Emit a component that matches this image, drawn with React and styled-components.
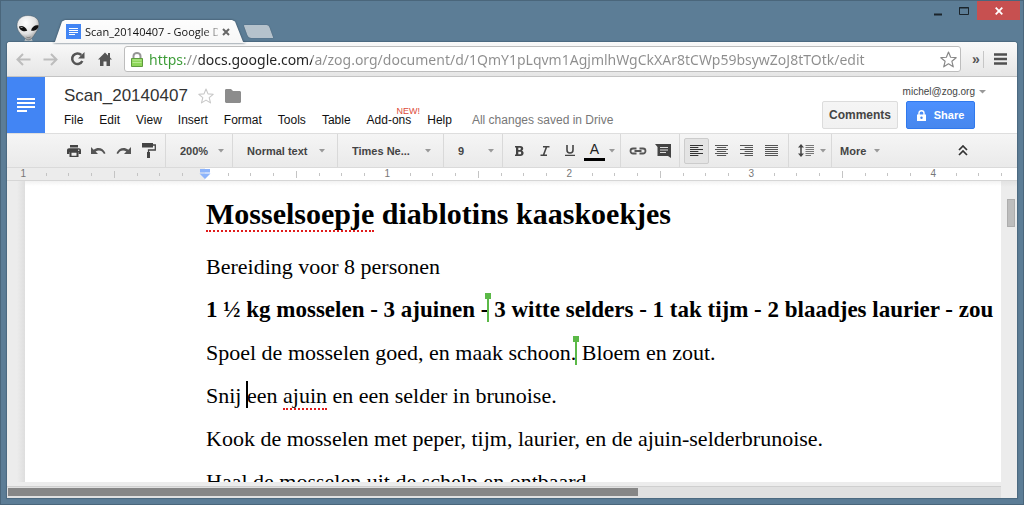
import React from 'react';
import styled, { createGlobalStyle } from 'styled-components';

const GlobalStyle = createGlobalStyle`
	* {
		box-sizing: border-box;
	}

	body {
		margin: 0;
		font-family: 'Liberation Sans', Arial, sans-serif;
		font-size: 12px;
		color: #222;
	}

	button,
	input,
	select {
		margin: 0;
		padding: 0;
		border: 0;
		background: none;
		font: inherit;
		color: inherit;
	}

	svg {
		display: block;
		flex: none;
	}
`;

/* ---------- Window frame ---------- */

const Frame = styled.div`
	display: flex;
	flex-direction: column;
	height: 100vh;
	padding: 0 6px 6px;
	background: #5c7d96;
	border: 1px solid #4a667b;
	overflow: hidden;
`;

const TitleBar = styled.header`
	display: flex;
	align-items: flex-end;
	height: 41px;
	flex: none;
	margin-right: -3px;
`;

const Avatar = styled.div`
	padding-left: 9px;
	width: 46px;
`;

const TabShadow = styled.div`
	filter: drop-shadow(0 0 1px #34495a);
	margin-bottom: -1px;
	position: relative;
`;

const Tab = styled.div`
	display: flex;
	align-items: center;
	width: 193px;
	height: 23px;
	padding: 0 16px 0 13px;
	background: linear-gradient(#fdfdfd, #f7f7f7);
	clip-path: polygon(0 100%, 2px 95%, 9px 6%, 12px 0, 179px 0, 182px 6%, 190px 95%, 193px 100%);
`;

const TabTitle = styled.span`
	flex: 1;
	min-width: 0;
	margin: 0 4px;
	overflow: hidden;
	white-space: nowrap;
	font-family: 'Open Sans', 'Noto Sans', sans-serif;
	font-size: 11px;
	line-height: 16px;
	color: #111;
	mask-image: linear-gradient(to right, #000 118px, transparent 140px);
`;

const PlainButton = styled.button`
	display: flex;
	align-items: center;
	justify-content: center;
`;

const NewTab = styled.button`
	width: 25px;
	height: 13px;
	margin: 0 0 4px 0;
	background: #b5c2cc;
	border-radius: 1px 2px 1px 3px;
	transform: skewX(20deg);
	box-shadow: 0 0 1px #34495a;
`;

const WindowButtons = styled.div`
	display: flex;
	align-self: flex-start;
	margin-left: auto;
	height: 19px;
`;

const WindowButton = styled(PlainButton)`
	width: ${(props) => (props.$close ? '43px' : '26px')};
	height: 19px;
	background: ${(props) => (props.$close ? '#c75050' : 'transparent')};
`;

const Content = styled.div`
	display: flex;
	flex-direction: column;
	flex: 1;
	min-height: 0;
	background: #fff;
	border-radius: 3px 3px 0 0;
	box-shadow: 0 0 1px 1px #4b697f;
	overflow: hidden;
`;

/* ---------- Browser toolbar ---------- */

const BrowserBar = styled.nav`
	display: flex;
	align-items: center;
	flex: none;
	height: 35px;
	padding-left: 3px;
	background: linear-gradient(#f9f9f9, #e6e6e6);
	border-bottom: 1px solid #c4c4c4;
`;

const NavButton = styled(PlainButton)`
	width: 27px;
	height: 26px;
	color: ${(props) => (props.$off ? '#bdbdbd' : '#555')};
`;

const AddressBox = styled.div`
	display: flex;
	align-items: center;
	flex: 1;
	min-width: 0;
	height: 26px;
	margin-left: 6px;
	padding: 0 3px 0 6px;
	background: #fff;
	border: 1px solid #bdbdbd;
	border-radius: 3px;
`;

const Address = styled.input`
	flex: 1;
	min-width: 0;
	margin-left: 6px;
	height: 22px;
	font-family: 'Noto Sans', 'Open Sans', sans-serif;
	font-size: 14px;
	outline: 0;
	color: transparent;
	background: linear-gradient(
		to right,
		#3a9b35 36px,
		#8d8d8d 36px,
		#8d8d8d 50px,
		#222 50px,
		#222 163px,
		#8d8d8d 163px
	);
	background-clip: text;
`;

const Overflow = styled(PlainButton)`
	width: 22px;
	height: 17px;
	margin-left: 1px;
	padding-left: 7px;
	border-right: 1px solid #c6c6c6;
	font-size: 14px;
	font-weight: bold;
	color: #555;
`;

const MenuButton = styled(PlainButton)`
	width: 33px;
	height: 26px;
`;

/* ---------- Docs header ---------- */

const DocsHeader = styled.header`
	display: flex;
	flex: none;
	height: 56px;
`;

const Home = styled.a`
	display: flex;
	align-items: center;
	justify-content: center;
	width: 38px;
	background: #4285f4;
`;

const Titles = styled.div`
	padding: 8px 0 0 19px;
`;

const TitleRow = styled.div`
	display: flex;
	align-items: center;
	height: 22px;
`;

const DocTitle = styled.h1`
	margin: 0 10px 0 0;
	font-size: 17px;
	font-weight: normal;
	line-height: 22px;
	color: #333;
`;

const MenuRow = styled.div`
	display: flex;
	gap: 16px;
	margin-top: 5px;
	line-height: 16px;
`;

const MenuItem = styled.button`
	position: relative;
	line-height: 16px;
	color: #111;
`;

const NewFlag = styled.span`
	position: absolute;
	top: -7px;
	left: 30px;
	font-size: 9px;
	line-height: 12px;
	color: #dd4b39;
`;

const Status = styled.span`
	margin-left: 4px;
	color: #777;
`;

const Account = styled.div`
	display: flex;
	flex-direction: column;
	align-items: flex-end;
	margin-left: auto;
	padding: 8px 31px 0 0;
`;

const AccountName = styled.button`
	display: flex;
	align-items: center;
	gap: 4px;
	font-size: 10px;
	line-height: 14px;
	color: #444;
`;

const Actions = styled.div`
	display: flex;
	gap: 8px;
	margin: 2px 11px 0 0;
`;

const Action = styled.button`
	display: flex;
	align-items: center;
	justify-content: center;
	gap: 8px;
	width: ${(props) => (props.$primary ? '69px' : '76px')};
	height: 28px;
	border: 1px solid ${(props) => (props.$primary ? '#3079ed' : '#dcdcdc')};
	border-radius: 2px;
	background: ${(props) =>
		props.$primary ? 'linear-gradient(#4d90fe, #4787ed)' : 'linear-gradient(#f5f5f5, #f1f1f1)'};
	color: ${(props) => (props.$primary ? '#fff' : '#444')};
	font-size: ${(props) => (props.$primary ? '11px' : '12px')};
	font-weight: bold;
`;

/* ---------- Editing toolbar ---------- */

const ToolBar = styled.div`
	display: flex;
	flex: none;
	height: 35px;
	background: linear-gradient(#f5f5f5, #eaeaea);
	border-top: 1px solid #dedede;
	border-bottom: 1px solid #dadada;
	color: #444;
	font-size: 11px;
	font-weight: bold;
`;

const Group = styled.div`
	display: flex;
	align-items: center;
	padding: 0 4px 0 ${(props) => props.$lead || '4px'};
	border-right: 1px solid #d9d9d9;
`;

const Tool = styled.button`
	display: flex;
	align-items: center;
	justify-content: center;
	width: 25px;
	height: 26px;
	border: 1px solid ${(props) => (props.$on ? '#ccc' : 'transparent')};
	border-radius: 2px;
	background: ${(props) => (props.$on ? '#e4e4e4' : 'transparent')};
	color: ${(props) => (props.$on ? '#333' : '#555')};
`;

const Picker = styled.label`
	display: flex;
	align-items: center;
	justify-content: space-between;
	width: ${(props) => props.$width};
	padding: 0 ${(props) => (props.$roomy ? '12px' : '8px')} 0 14px;
	border-right: 1px solid #d9d9d9;
`;

const Choice = styled.select`
	appearance: none;
	flex: 1;
	min-width: 0;
	outline: 0;
`;

const ColorTool = styled(Tool)`
	flex-direction: column;
	font-size: 14px;
	font-weight: normal;
	line-height: 17px;
	color: #222;

	&::after {
		content: '';
		width: 21px;
		height: 3px;
		background: #000;
	}
`;

const ArrowTool = styled.button`
	display: flex;
	align-items: center;
	justify-content: center;
	width: 9px;
	height: 26px;
`;

const More = styled.button`
	display: flex;
	align-items: center;
	gap: 8px;
	margin-left: 8px;
	font-size: 11px;
	font-weight: bold;
`;

const Collapse = styled(Tool)`
	align-self: center;
	margin: 0 42px 0 auto;
`;

/* ---------- Ruler ---------- */

const RulerBar = styled.div`
	display: flex;
	flex: none;
	height: 13px;
	padding-left: 5px;
	overflow: hidden;
	background: linear-gradient(to right, #ececec 198px, #fff 198px);
	border-bottom: 1px solid #d6d6d6;
`;

const Inch = styled.div`
	display: grid;
	grid-template-columns: repeat(8, 1fr);
	place-items: center;
	flex: none;
	width: 182px;
	font-size: 10px;
	line-height: 12px;
	color: #777;
`;

const Tick = styled.span`
	width: 1px;
	height: ${(props) => (props.$half ? '7px' : '3px')};
	background: #c4c4c4;
`;

/* ---------- Page ---------- */

const Workspace = styled.main`
	display: flex;
	flex: 1;
	min-height: 0;
	background: #ececec;
`;

const Viewport = styled.div`
	display: flex;
	flex-direction: column;
	flex: 1;
	min-width: 0;
`;

const Canvas = styled.div`
	flex: 1;
	min-height: 0;
	padding-left: 18px;
	overflow: hidden;
	background: linear-gradient(to right, #ececec 10px, #dedede 18px);
`;

const Page = styled.article`
	min-height: 100%;
	padding: 13px 0 0 181px;
	background: linear-gradient(#f2f2f2, #fff 5px);
	font-family: 'Liberation Serif', 'Times New Roman', serif;
	color: #000;
	white-space: nowrap;
`;

const Heading = styled.h2`
	margin: 0 0 11px;
	font-size: 30px;
	line-height: 40px;
`;

const Line = styled.p`
	margin: 0;
	font-size: ${(props) => (props.$strong ? '23px' : '22px')};
	font-weight: ${(props) => (props.$strong ? 'bold' : 'normal')};
	line-height: 43px;
	height: 43px;
`;

const Misspelt = styled.span`
	border-bottom: 2px dotted #e01b1b;
`;

const Caret = styled.span`
	position: relative;

	&::before {
		content: '';
		position: absolute;
		left: -1px;
		top: -2px;
		width: 2px;
		height: 27px;
		background: ${(props) => (props.$peer ? '#5bb947' : '#000')};
	}

	&::after {
		content: '';
		position: absolute;
		left: -3px;
		top: -4px;
		width: 6px;
		height: 6px;
		background: ${(props) => (props.$peer ? '#5bb947' : 'transparent')};
	}
`;

const ScrollRow = styled.div`
	flex: none;
	height: 16px;
	padding: 6px 0 2px 1px;
	background: linear-gradient(#ececec 4px, #cfcfcf 4px, #cfcfcf 5px, #e0e0e0 5px);
`;

const ScrollThumb = styled.div`
	width: 63.4%;
	height: 8px;
	background: #868686;
`;

const ScrollColumn = styled.div`
	width: 16px;
	padding: 18px 2px 0 6px;
	background: linear-gradient(#e2e2e2, #ececec 6px);
`;

const ColumnThumb = styled.div`
	height: 28px;
	background: #bdbdbd;
	border: 1px solid #adadad;
`;

/* ---------- Drawings ---------- */

const AlienIcon = () => (
	<svg width="26" height="27" viewBox="0 0 26 27">
		<defs>
			<radialGradient id="skin" cx="0.4" cy="0.3" r="0.75">
				<stop offset="0" stopColor="#fff" />
				<stop offset="0.6" stopColor="#e2e2e2" />
				<stop offset="1" stopColor="#8d8d8d" />
			</radialGradient>
		</defs>
		<path d="M10 22h5l2 5H8z" fill="#b9bec1" />
		<path
			d="M12 .5C5 .5 1 5 1 10.500c0 5 3.500 8.500 6 11 2 2 4 3.500 5.500 3.500 2 0 4-2 5.500-4.500 2-3.500 5-6.500 5-11.500C23 4 18.500.5 12 .5z"
			fill="url(#skin)"
			stroke="#475a68"
			strokeWidth="0.5"
		/>
		<path d="M3 11.500c2.500-1.500 7 0 8.300 4.300-3.800 1.400-8-.4-8.300-4.300z" fill="#111" />
		<path d="M22.500 10.500c-3-1-6.500 1-7.500 5 3.800 1 7.500-1.300 7.500-5z" fill="#111" />
		<path d="M4.500 12.300l2 .2" stroke="#ccc" strokeWidth="0.8" />
		<path d="M10.500 22.200c1.200.5 2.800.5 4-.2" stroke="#666" strokeWidth="0.7" fill="none" />
	</svg>
);

const FileIcon = () => (
	<svg width="15" height="15" viewBox="0 0 15 15">
		<path d="M0 0h15v15H0z" fill="#4285f4" />
		<path d="M3 4.500h9M3 6.500h9M3 8.500h9M3 10.500h6" stroke="#fff" />
	</svg>
);

const LockIcon = () => (
	<svg width="12" height="15" viewBox="0 0 12 15">
		<path d="M2.500 7V4a3.500 3 0 0 1 7 0v3" fill="none" stroke="#969696" strokeWidth="2" />
		<path d="M.5 6.500h11v8H.5z" fill="#8ed65a" stroke="#5f9b3f" />
		<path d="M1.500 8h9M1.500 10.500h9" stroke="#b9ea93" />
	</svg>
);

const StarIcon = ({ size, color }) => (
	<svg width={size} height={size} viewBox="0 0 16 16">
		<path
			d="M8 1l2 4.900 5.200.4-4 3.400 1.300 5.200L8 12.100l-4.500 2.800 1.300-5.200-4-3.400L6 5.900z"
			fill="#fff"
			stroke={color}
			strokeWidth="1.1"
			strokeLinejoin="round"
		/>
	</svg>
);

const ArrowDown = ({ size = 6, color = '#999' }) => (
	<svg width={size} height="4" viewBox="0 0 6 4" preserveAspectRatio="none">
		<path d="M0 0h6L3 3.500z" fill={color} />
	</svg>
);

const BackIcon = () => (
	<svg width="15" height="13" viewBox="0 0 15 13">
		<path d="M7 1L1.500 6.500 7 12M2 6.500h12.500" fill="none" stroke="currentColor" strokeWidth="2" />
	</svg>
);

const ForwardIcon = () => (
	<svg width="15" height="13" viewBox="0 0 15 13">
		<path d="M8 1l5.500 5.500L8 12M13 6.500H.5" fill="none" stroke="currentColor" strokeWidth="2" />
	</svg>
);

const ReloadIcon = () => (
	<svg width="15" height="14" viewBox="0 0 15 14">
		<path d="M11.300 3A5.300 5.300 0 1 0 12.300 9" fill="none" stroke="currentColor" strokeWidth="2.500" />
		<path d="M14.500 0v6.500H8z" fill="currentColor" />
	</svg>
);

const HouseIcon = () => (
	<svg width="14" height="14" viewBox="0 0 14 14">
		<path d="M7 .5L0 7.500h2V14h3.500V9.500h3V14H12V7.500h2L12 5.500V1h-2v2.500z" fill="currentColor" />
	</svg>
);

const PrintIcon = () => (
	<svg width="14" height="12" viewBox="0 0 14 12">
		<path d="M3 0h8v2.500H3zM2 3.300h10c1.200 0 2 .8 2 2V9h-2.500V7h-9v2H0V5.300c0-1.200.8-2 2-2z" fill="#444" />
		<path d="M2.500 6.500h9V12h-9z" fill="#444" />
		<path d="M4.500 7.700h5v3h-5z" fill="#f0f0f0" />
		<circle cx="11.700" cy="5.200" r="0.700" fill="#eee" />
	</svg>
);

const UndoIcon = ({ flip }) => (
	<svg width="15" height="8" viewBox="0 0 15 8">
		<g transform={flip ? 'translate(15 0) scale(-1 1)' : undefined}>
			<path d="M0 0v7h7L4.600 4.600C7.500 2.600 11 3.200 13 7l1.500-.7C12.300 1 7 -.4 2.700 2.700z" fill="currentColor" />
		</g>
	</svg>
);

const PaintIcon = () => (
	<svg width="14" height="15" viewBox="0 0 14 15">
		<path d="M0 0h11v4.500H0z" fill="#444" />
		<path d="M11 2h2.300v5H6.500v3" fill="none" stroke="#444" strokeWidth="1.300" />
		<path d="M5 9h3v6H5z" fill="#444" />
	</svg>
);

const BoldIcon = () => (
	<svg width="9" height="10" viewBox="0 0 9 10">
		<path
			fillRule="evenodd"
			d="M0 0h5.200C7.200 0 8.200 1 8.200 2.600c0 1-.5 1.700-1.300 2.100 1.100.4 1.700 1.200 1.700 2.300C8.600 8.900 7.300 10 5.300 10H0V8.600h1V1.400H0zM3.300 1.700v2.200h1.500c.7 0 1.100-.4 1.100-1.100S5.500 1.700 4.800 1.700zM3.300 5.700v2.500h1.700c.8 0 1.200-.5 1.200-1.300 0-.7-.4-1.200-1.200-1.200z"
			fill="#444"
		/>
	</svg>
);

const ItalicIcon = () => (
	<svg width="10" height="10" viewBox="0 0 10 10">
		<path d="M3 .8h6.500M.5 9.200H7M6.500 1L3.500 9" stroke="#444" strokeWidth="1.600" />
	</svg>
);

const UnderlineIcon = () => (
	<svg width="10" height="11" viewBox="0 0 10 11">
		<path d="M2 0v5a3 3 0 0 0 6 0V0" fill="none" stroke="#444" strokeWidth="1.600" />
		<path d="M0 10.300h10" stroke="#444" strokeWidth="1.200" />
	</svg>
);

const LinkIcon = () => (
	<svg width="18" height="8" viewBox="0 0 18 8">
		<path
			d="M7.500 1.500H4a2.500 2.500 0 0 0 0 5h3.500M10.500 1.500H14a2.500 2.500 0 0 1 0 5h-3.500M5.500 4h7"
			fill="none"
			stroke="#555"
			strokeWidth="1.800"
		/>
	</svg>
);

const CommentIcon = () => (
	<svg width="16" height="14" viewBox="0 0 16 14">
		<path d="M0 0h16v14l-3-2H2.500V3z" fill="#444" />
		<path d="M5 3.500h8M5 6h8M5 8.500h6" stroke="#ddd" strokeWidth="1.200" />
	</svg>
);

const alignments = {
	left: ['0', '14', '0', '9', '0', '14', '0', '9', '0', '14', '0', '9'],
	center: ['0', '14', '2', '12', '0', '14', '2', '12', '0', '14', '2', '12'],
	right: ['0', '14', '5', '14', '0', '14', '5', '14', '0', '14', '5', '14'],
	justify: ['0', '14', '0', '14', '0', '14', '0', '14', '0', '14', '0', '14'],
};

const AlignIcon = ({ kind }) => {
	const ends = alignments[kind];
	return (
		<svg width="13" height="12" viewBox="0 0 14 12" preserveAspectRatio="none">
			{[0, 1, 2, 3, 4, 5].map((row) => (
				<path
					key={row}
					d={`M${ends[row * 2]} ${row * 2 + 0.5}H${ends[row * 2 + 1]}`}
					stroke="currentColor"
					strokeWidth="1.200"
				/>
			))}
		</svg>
	);
};

const SpacingIcon = () => (
	<svg width="16" height="13" viewBox="0 0 16 13">
		<path d="M3 2v9" stroke="#444" strokeWidth="1.500" />
		<path d="M0 3.500L3 0l3 3.500zM0 9.500L3 13l3-3.500z" fill="#444" />
		<path d="M7.500 1.500H16M7.500 3.500H16M7.500 5.500H16M7.500 7.500H16M7.500 9.500H16M7.500 11.500H13" stroke="#777" />
	</svg>
);

const CollapseIcon = () => (
	<svg width="10" height="11" viewBox="0 0 10 11">
		<path d="M1 5l4-4 4 4M1 10l4-4 4 4" fill="none" stroke="#333" strokeWidth="1.700" />
	</svg>
);

const MarginIcon = () => (
	<svg width="12" height="10" viewBox="0 0 12 10">
		<path d="M1 0h10v3.500H1zM.5 4.500h11L6 10z" fill="#8db4fb" />
	</svg>
);

const pickers = [
	{ label: 'Zoom', value: '200%', width: '67px' },
	{ label: 'Styles', value: 'Normal text', width: '105px', roomy: true },
	{ label: 'Font', value: 'Times Ne...', width: '106px', roomy: true },
	{ label: 'Font size', value: '9', width: '59px' },
];

const menus = ['File', 'Edit', 'View', 'Insert', 'Format', 'Tools', 'Table', 'Add-ons', 'Help'];

const inches = ['1', '', '1', '2', '3', '4'];

const Browser = () => (
	<BrowserBar>
		<NavButton $off aria-label="Back">
			<BackIcon />
		</NavButton>
		<NavButton $off aria-label="Forward">
			<ForwardIcon />
		</NavButton>
		<NavButton aria-label="Reload">
			<ReloadIcon />
		</NavButton>
		<NavButton aria-label="Home">
			<HouseIcon />
		</NavButton>
		<AddressBox>
			<LockIcon />
			<Address
				aria-label="Address"
				defaultValue="https://docs.google.com/a/zog.org/document/d/1QmY1pLqvm1AgjmlhWgCkXAr8tCWp59bsywZoJ8tTOtk/edit"
			/>
			<PlainButton aria-label="Bookmark">
				<StarIcon size={17} color="#888" />
			</PlainButton>
		</AddressBox>
		<Overflow aria-label="More extensions">»</Overflow>
		<MenuButton aria-label="Menu">
			<svg width="13" height="12" viewBox="0 0 13 12">
				<path d="M0 1.500h13M0 6h13M0 10.500h13" stroke="#505050" strokeWidth="2.600" />
			</svg>
		</MenuButton>
	</BrowserBar>
);

const Header = () => (
	<DocsHeader>
		<Home href="#" aria-label="Docs home">
			<svg width="18" height="14" viewBox="0 0 18 14">
				<path d="M0 1h18M0 5h18M0 9h18M0 13h10" stroke="#fff" strokeWidth="2" />
			</svg>
		</Home>
		<Titles>
			<TitleRow>
				<DocTitle>Scan_20140407</DocTitle>
				<PlainButton aria-label="Star">
					<StarIcon size={16} color="#c8c8c8" />
				</PlainButton>
				<PlainButton aria-label="Move to folder">
					<svg width="27" height="14" viewBox="0 0 27 14">
						<path d="M11 1.500C11 .7 11.500 0 12.300 0H17l2 2h6.500c.8 0 1.500.6 1.500 1.400v9.100c0 .8-.6 1.500-1.400 1.500H12.400c-.8 0-1.400-.6-1.400-1.400z" fill="#8c8c8c" />
					</svg>
				</PlainButton>
			</TitleRow>
			<MenuRow>
				{menus.map((name) => (
					<MenuItem key={name}>
						{name}
						{name === 'Add-ons' && <NewFlag>NEW!</NewFlag>}
					</MenuItem>
				))}
				<Status>All changes saved in Drive</Status>
			</MenuRow>
		</Titles>
		<Account>
			<AccountName>
				michel@zog.org
				<ArrowDown size={7} />
			</AccountName>
			<Actions>
				<Action>Comments</Action>
				<Action $primary>
					<svg width="9" height="11" viewBox="0 0 9 11">
						<path d="M2 5V3a2.500 2.300 0 0 1 5 0v2" fill="none" stroke="#fff" strokeWidth="1.400" />
						<path d="M0 4.500h9V11H0z" fill="#fff" />
						<circle cx="4.500" cy="7.700" r="1.200" fill="#4787ed" />
					</svg>
					Share
				</Action>
			</Actions>
		</Account>
	</DocsHeader>
);

const Tools = () => (
	<ToolBar>
		<Group $lead="54px">
			<Tool aria-label="Print">
				<PrintIcon />
			</Tool>
			<Tool aria-label="Undo">
				<UndoIcon />
			</Tool>
			<Tool aria-label="Redo">
				<UndoIcon flip />
			</Tool>
			<Tool aria-label="Paint format">
				<PaintIcon />
			</Tool>
		</Group>
		{pickers.map((p) => (
			<Picker key={p.label} $width={p.width} $roomy={p.roomy}>
				<Choice aria-label={p.label}>
					<option>{p.value}</option>
				</Choice>
				<ArrowDown />
			</Picker>
		))}
		<Group>
			<Tool aria-label="Bold">
				<BoldIcon />
			</Tool>
			<Tool aria-label="Italic">
				<ItalicIcon />
			</Tool>
			<Tool aria-label="Underline">
				<UnderlineIcon />
			</Tool>
			<ColorTool aria-label="Text color">A</ColorTool>
			<ArrowTool aria-label="Text color options">
				<ArrowDown />
			</ArrowTool>
		</Group>
		<Group>
			<Tool aria-label="Insert link">
				<LinkIcon />
			</Tool>
			<Tool aria-label="Insert comment">
				<CommentIcon />
			</Tool>
		</Group>
		<Group>
			{Object.keys(alignments).map((kind) => (
				<Tool key={kind} $on={kind === 'left'} aria-label={`Align ${kind}`}>
					<AlignIcon kind={kind} />
				</Tool>
			))}
		</Group>
		<Group>
			<Tool aria-label="Line spacing">
				<SpacingIcon />
			</Tool>
			<ArrowTool aria-label="Line spacing options">
				<ArrowDown />
			</ArrowTool>
		</Group>
		<More>
			More
			<ArrowDown />
		</More>
		<Collapse aria-label="Hide the menus">
			<CollapseIcon />
		</Collapse>
	</ToolBar>
);

const Ruler = () => (
	<RulerBar>
		{inches.map((inch, index) => (
			<Inch key={index}>
				<span>{inch || <MarginIcon />}</span>
				{[1, 2, 3, 4, 5, 6, 7].map((n) => (
					<Tick key={n} $half={n === 4} />
				))}
			</Inch>
		))}
	</RulerBar>
);

const Recipe = () => (
	<Page>
		<Heading>
			<Misspelt>Mosselsoepje</Misspelt> diablotins kaaskoekjes
		</Heading>
		<Line>Bereiding voor 8 personen</Line>
		<Line $strong>
			1 ½ kg mosselen - 3 ajuinen -<Caret $peer /> 3 witte selders - 1 tak tijm - 2 blaadjes laurier - zou
		</Line>
		<Line>
			Spoel de mosselen goed, en maak schoon.
			<Caret $peer /> Bloem en zout.
		</Line>
		<Line>
			Snij <Caret />
			een <Misspelt>ajuin</Misspelt> en een selder in brunoise.
		</Line>
		<Line>Kook de mosselen met peper, tijm, laurier, en de ajuin-selderbrunoise.</Line>
		<Line>Haal de mosselen uit de schelp en ontbaard.</Line>
	</Page>
);

const App = () => {
	return (
		<>
			<GlobalStyle />
			<Frame>
				<TitleBar>
					<Avatar>
						<AlienIcon />
					</Avatar>
					<TabShadow>
						<Tab>
							<FileIcon />
							<TabTitle>Scan_20140407 - Google D</TabTitle>
							<PlainButton aria-label="Close tab">
								<svg width="8" height="8" viewBox="0 0 8 8">
									<path d="M1 1l6 6M7 1L1 7" stroke="#666" strokeWidth="2" />
								</svg>
							</PlainButton>
						</Tab>
					</TabShadow>
					<NewTab aria-label="New tab" />
					<WindowButtons>
						<WindowButton aria-label="Minimize">
							<svg width="8" height="10" viewBox="0 0 8 10">
								<path d="M0 8.500h8" stroke="#1b242b" strokeWidth="2" />
							</svg>
						</WindowButton>
						<WindowButton aria-label="Maximize">
							<svg width="10" height="8" viewBox="0 0 10 8">
								<path d="M.5.500h9v7h-9zM0 1h10" fill="none" stroke="#1b242b" />
							</svg>
						</WindowButton>
						<WindowButton $close aria-label="Close">
							<svg width="8" height="8" viewBox="0 0 8 8">
								<path d="M.7.700l6.600 6.600M7.300.700L.7 7.300" stroke="#fff" strokeWidth="1.800" />
							</svg>
						</WindowButton>
					</WindowButtons>
				</TitleBar>
				<Content>
					<Browser />
					<Header />
					<Tools />
					<Ruler />
					<Workspace>
						<Viewport>
							<Canvas>
								<Recipe />
							</Canvas>
							<ScrollRow>
								<ScrollThumb />
							</ScrollRow>
						</Viewport>
						<ScrollColumn>
							<ColumnThumb />
						</ScrollColumn>
					</Workspace>
				</Content>
			</Frame>
		</>
	);
};

export default App;
